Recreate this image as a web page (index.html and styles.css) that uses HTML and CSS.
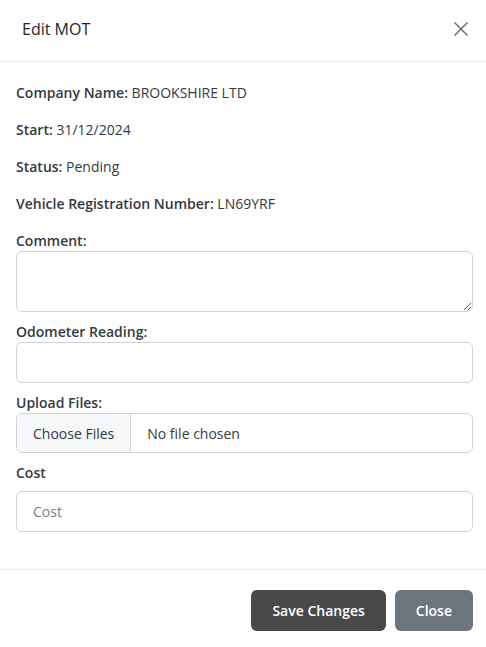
FILE: index.html
```html
<!DOCTYPE html>
<html lang="en">
<head>
<meta charset="utf-8">
<title>Edit MOT</title>
<link rel="stylesheet" href="styles.css">
</head>
<body>
<div class="modal">
  <div class="modal-header">
    <h5 class="modal-title">Edit MOT</h5>
    <button class="btn-close" type="button" aria-label="Close">
      <svg width="16" height="16" viewBox="0 0 16 16"><path d="M1.5 1.5 L14.5 14.5 M14.5 1.5 L1.5 14.5" stroke="#6f6f6f" stroke-width="1.5" fill="none"/></svg>
    </button>
  </div>
  <div class="modal-body">
    <p class="info"><strong>Company Name:</strong> BROOKSHIRE LTD</p>
    <p class="info"><strong>Start:</strong> 31/12/2024</p>
    <p class="info"><strong>Status:</strong> Pending</p>
    <p class="info"><strong>Vehicle Registration Number:</strong> LN69YRF</p>

    <div class="group">
      <label class="label" for="comment">Comment:</label>
      <textarea id="comment" class="control textarea"></textarea>
    </div>
    <div class="group">
      <label class="label" for="odo">Odometer Reading:</label>
      <input id="odo" class="control" type="text">
    </div>
    <div class="group">
      <label class="label">Upload Files:</label>
      <div class="control file">
        <span class="file-btn">Choose Files</span>
        <span class="file-name">No file chosen</span>
      </div>
    </div>
    <div class="group">
      <label class="label label-spaced" for="cost">Cost</label>
      <input id="cost" class="control" type="text" placeholder="Cost">
    </div>
  </div>
  <div class="modal-footer">
    <button class="btn btn-dark" type="button">Save Changes</button>
    <button class="btn btn-secondary" type="button">Close</button>
  </div>
</div>
</body>
</html>
```
FILE: styles.css
```css
* { box-sizing: border-box; }
html, body { margin: 0; padding: 0; background: #fff; }
body {
  font-family: "Open Sans", "Noto Sans", sans-serif;
  font-size: 14px;
  line-height: 1.5;
  color: #343a40;
}
.modal { width: 486px; }
.modal-header {
  height: 62px;
  display: flex;
  align-items: center;
  justify-content: space-between;
  padding: 0 16px 0 22px;
  border-bottom: 1px solid #e9ecef;
}
.modal-title {
  margin: 0;
  font-size: 16px;
  font-weight: 500;
  color: #212529;
  padding-bottom: 3px;
}
.btn-close {
  border: 0;
  background: transparent;
  padding: 0;
  width: 16px;
  height: 16px;
  margin-right: 1px;
  margin-bottom: 3px;
  display: flex;
}
.modal-body { padding: 20px 13px 28px 16px; }
.info { margin: 0 0 16px; }
.info strong { font-weight: 600; }
.group { margin-bottom: 9px; }
.label { display: block; font-weight: 600; margin-bottom: 0; }
.label-spaced { margin-bottom: 8px; }
.control {
  display: block;
  width: 100%;
  height: 41px;
  border: 1px solid #ced4da;
  border-radius: 6px;
  padding: 9px 16px;
  font-family: inherit;
  font-size: 14px;
  color: #343a40;
  background: #fff;
  outline: none;
}
.control::placeholder { color: #7a8087; }
.textarea { height: 61px; resize: vertical; }
.file {
  display: flex;
  align-items: stretch;
  padding: 0;
  overflow: hidden;
  height: 40px;
}
.file-btn {
  display: flex;
  align-items: center;
  padding: 0 16px;
  background: #f6f7f9;
  border-right: 1px solid #ced4da;
  color: #343a40;
}
.file-name {
  display: flex;
  align-items: center;
  padding-left: 16px;
  color: #343a40;
}
.modal-footer {
  border-top: 1px solid #e9ecef;
  padding: 20px 13px 17px;
  display: flex;
  justify-content: flex-end;
  gap: 9px;
}
.btn {
  height: 41px;
  border: 0;
  border-radius: 6px;
  font-family: inherit;
  font-size: 14px;
  font-weight: 600;
  color: #fff;
  padding: 0 21px;
}
.btn-dark { background: #48494b; }
.btn-secondary { background: #6c757d; }
```
